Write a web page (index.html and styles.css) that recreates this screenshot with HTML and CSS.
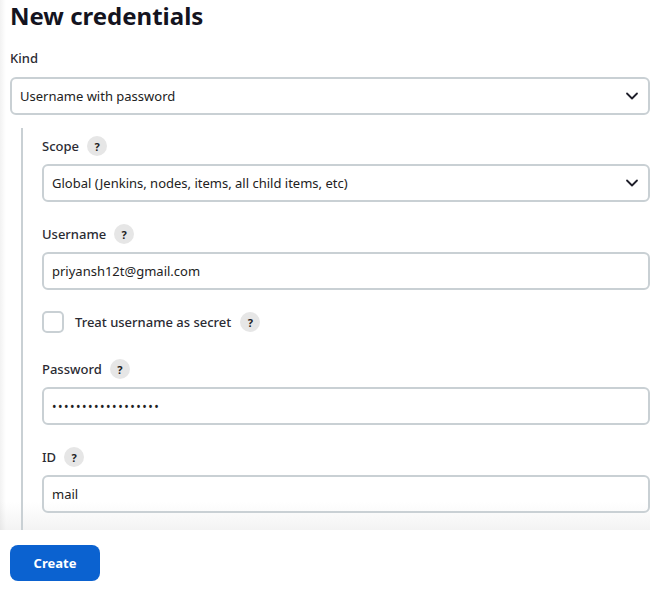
FILE: index.html
```html
<!DOCTYPE html>
<html lang="en">
<head>
    <meta charset="UTF-8">
    <title>New credentials</title>
    <link rel="stylesheet" href="styles.css">
</head>
<body>
    <div class="page">
        <h1>New credentials</h1>

        <div class="field kind">
            <div class="label">Kind</div>
            <div class="select">
                <span>Username with password</span>
                <svg class="chevron" viewBox="0 0 16 16" width="16" height="16"><path d="M3 5.5l5 5 5-5" fill="none" stroke="#1f1f2a" stroke-width="1.8" stroke-linecap="round" stroke-linejoin="round"/></svg>
            </div>
        </div>

        <div class="nested">
            <div class="field">
                <div class="label">Scope <span class="help">?</span></div>
                <div class="select">
                    <span>Global (Jenkins, nodes, items, all child items, etc)</span>
                    <svg class="chevron" viewBox="0 0 16 16" width="16" height="16"><path d="M3 5.5l5 5 5-5" fill="none" stroke="#1f1f2a" stroke-width="1.8" stroke-linecap="round" stroke-linejoin="round"/></svg>
                </div>
            </div>

            <div class="field">
                <div class="label">Username <span class="help">?</span></div>
                <div class="input">priyansh12t@gmail.com</div>
            </div>

            <div class="check-row">
                <span class="checkbox"></span>
                <span class="check-label">Treat username as secret</span>
                <span class="help">?</span>
            </div>

            <div class="field after-check">
                <div class="label">Password <span class="help">?</span></div>
                <div class="input dots">••••••••••••••••••</div>
            </div>

            <div class="field">
                <div class="label">ID <span class="help">?</span></div>
                <div class="input">mail</div>
            </div>
        </div>
    </div>

    <div class="footer">
        <button class="create">Create</button>
    </div>
</body>
</html>
```

FILE: styles.css
```css
body {
    margin: 0;
    font-family: "Noto Sans", "Open Sans", sans-serif;
    color: #14141f;
    background: #fff;
    overflow: hidden;
}
.page {
    padding-left: 10px;
    background:
        linear-gradient(to right, rgba(0, 0, 0, 0.05) 0, rgba(0, 0, 0, 0) 6px),
        linear-gradient(to bottom, #fff 0, #fff calc(100% - 28px), #f3f3f3 100%);
}
h1 {
    margin: 0;
    padding-top: 2px;
    font-size: 24px;
    line-height: 27px;
    font-weight: 700;
}
.field {
    margin-top: 22px;
}
.kind {
    margin-top: 19px;
}
.kind .select {
    margin-top: 9px;
}
.label {
    display: flex;
    align-items: center;
    gap: 8px;
    height: 20px;
    font-size: 13px;
    font-weight: 500;
    color: #2b2b33;
}
.help {
    display: inline-flex;
    align-items: center;
    justify-content: center;
    width: 20px;
    height: 20px;
    border-radius: 50%;
    background: #e6e6e6;
    font-size: 11px;
    font-weight: 700;
    color: #222;
}
.select, .input {
    display: flex;
    align-items: center;
    justify-content: space-between;
    box-sizing: border-box;
    height: 38px;
    margin-top: 8px;
    padding: 0 8px;
    border: 2px solid #c9d0d4;
    border-radius: 6px;
    font-size: 13px;
    color: #222;
}
.chevron {
    margin-right: 0;
}
.dots {
    font-size: 12px;
    letter-spacing: 1.5px;
}
.nested {
    margin: 13px 0 0 11px;
    padding: 0 0 17px 19px;
    border-left: 2px solid #c9d0d4;
}
.nested .field:first-child {
    margin-top: 0;
    padding-top: 8px;
}
.check-row {
    display: flex;
    align-items: center;
    gap: 11px;
    margin-top: 21px;
    font-size: 13px;
    font-weight: 500;
    color: #2b2b33;
}
.checkbox {
    box-sizing: border-box;
    width: 22px;
    height: 22px;
    border: 2px solid #c9d0d4;
    border-radius: 5px;
    background: #fff;
}
.check-label {
    margin-right: -2px;
}
.after-check {
    margin-top: 26px;
}
.footer {
    padding: 15px 10px 20px;
    background: #fff;
}
.create {
    width: 90px;
    height: 36px;
    border: none;
    border-radius: 8px;
    background: #0b62d0;
    color: #fff;
    font-family: inherit;
    font-size: 13px;
    font-weight: 700;
}
```
